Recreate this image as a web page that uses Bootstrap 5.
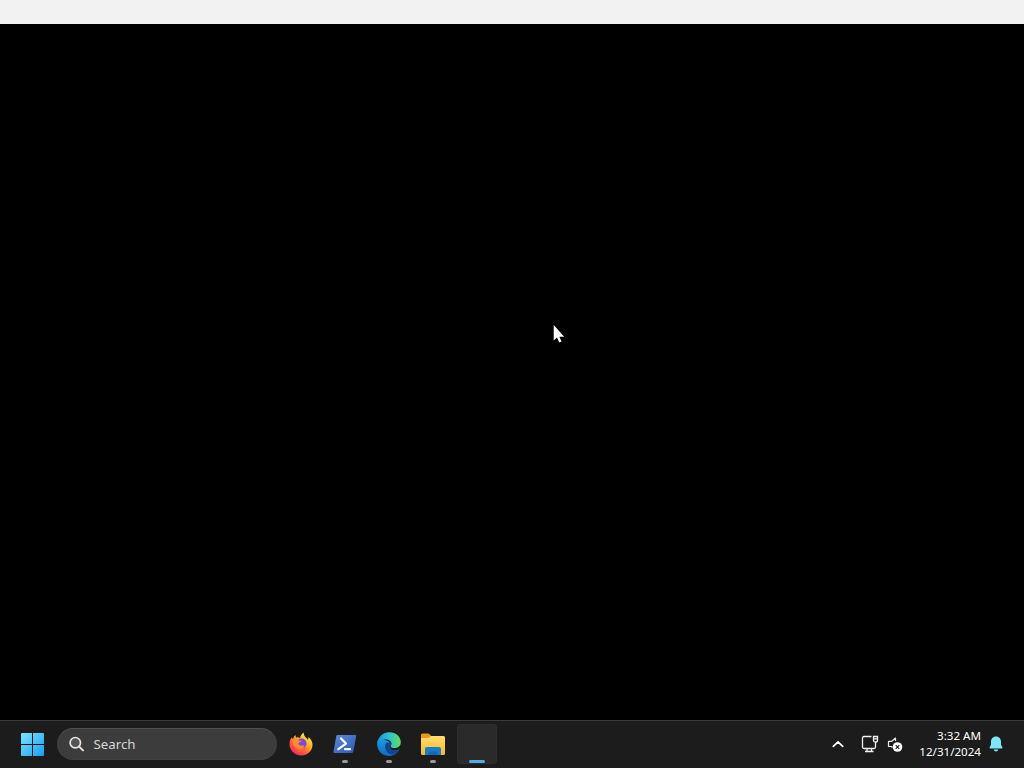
<!DOCTYPE html>
<html lang="en">
<head>
<meta charset="utf-8">
<meta name="viewport" content="width=device-width, initial-scale=1">
<title>Desktop</title>
<link href="https://cdn.jsdelivr.net/npm/bootstrap@5.3.0/dist/css/bootstrap.min.css" rel="stylesheet">
<style>
body{background:#000;font-family:"Noto Sans","Open Sans",sans-serif;cursor:default}
svg{display:block;flex:none}
.window-strip{height:24px;background:#f2f2f2}
.taskbar{height:48px;background:#1c1c1c;border-top:1px solid #393939;padding:3px 21px 4px 13px}
.task-btn{width:40px;height:40px;border:0;border-radius:4px;padding:0;background:none;position:relative}
.task-btn.active{background:#2a2a2a;box-shadow:inset 0 0 0 1px #2d2d2d}
.run-dot{position:absolute;bottom:1px;left:17px;width:6px;height:3px;border-radius:2px;background:#9a9a9a}
.active .run-dot{left:12px;width:16px;background:#55addf}
.search-pill{width:220px;height:32px;background:#3c3c3c;border:1px solid #404040;border-top-color:#505050;color:#d6d6d6;font-size:13.3px;line-height:30px;padding-left:9.500px;margin:0 4px}
.clock{font-size:11.6px;line-height:16px;color:#fff;width:70px;margin-left:8px;margin-right:8px}
.pointer{position:absolute;left:552px;top:323px}
</style>
</head>
<body class="vh-100 d-flex flex-column overflow-hidden">
<header class="window-strip flex-shrink-0"></header>
<main class="flex-grow-1"></main>
<footer class="taskbar d-flex align-items-center justify-content-between flex-shrink-0">
  <div class="d-flex align-items-center">
    <button class="task-btn d-flex align-items-center justify-content-center" aria-label="Start">
      <svg width="24" height="24" viewBox="0 0 24 24"><defs><linearGradient id="win" x1="0" y1="0" x2="24" y2="24" gradientUnits="userSpaceOnUse"><stop stop-color="#83e5ff"/><stop offset="1" stop-color="#159bf3"/></linearGradient></defs><path fill="url(#win)" d="M1 1H11V12H0V2Q0 1 1 1M12 1H22Q23 1 23 2V12H12ZM0 13H11V24H1Q0 24 0 23ZM12 13H23V23Q23 24 22 24H12Z"/></svg>
    </button>
    <div class="search-pill rounded-pill d-flex align-items-center">
      <svg width="18" height="18" viewBox="0 0 18 18" fill="none"><circle cx="7.300" cy="7.700" r="5.200" fill="#555" stroke="#e5e5e5" stroke-width="1.700"/><path d="M11.200 11.600L15 15.400" stroke="#e5e5e5" stroke-width="2" stroke-linecap="round"/></svg>
      <span class="ms-2">Search</span>
    </div>
    <div class="d-flex gap-1">
      <button class="task-btn d-flex align-items-center justify-content-center" aria-label="Firefox">
        <svg width="24" height="24" viewBox="0 0 24 24"><defs><linearGradient id="fox" x1="19" y1="2" x2="5" y2="22" gradientUnits="userSpaceOnUse"><stop stop-color="#fff04d"/><stop offset=".35" stop-color="#ffb32f"/><stop offset=".65" stop-color="#ff6537"/><stop offset="1" stop-color="#ed2468"/></linearGradient></defs><path fill="url(#fox)" d="M2.500 5.500 4 7Q4.500 4.500 6.500 3L7 5.500Q9 5 11 6C11.500 3.500 13 1.500 14.700.5 14.700 3.500 16 4.500 18 6.500L19 8 19.500 5Q23.500 8.500 23.500 13C23.300 19 18.500 23.500 12.200 23.500S.5 18.500.5 12.500Q.5 8 2.500 5.500Z"/><circle cx="12.500" cy="11.500" r="5" fill="#8048cf"/><path fill="#ff8a32" d="M3.500 8Q6.500 6 9.500 8.200L12.500 8.700Q12.200 9.800 10.200 10.400C8.700 11 9.200 13 11.500 13.500Q14 14 15.500 13C14.500 17.500 10.500 18.500 7.800 16.500 5.500 14.700 3.500 11.500 3.500 8Z"/><path fill="#ff6038" d="M5 13Q7 18 12 17.500 16 17 17 14 17.500 19 12 20 6.500 20 5 13Z"/></svg>
      </button>
      <button class="task-btn d-flex align-items-center justify-content-center" aria-label="PowerShell">
        <svg width="24" height="24" viewBox="0 0 24 24"><defs><linearGradient id="psh" x2="1" y2="1"><stop stop-color="#6089d6"/><stop offset="1" stop-color="#2d5aae"/></linearGradient></defs><path fill="url(#psh)" d="M4.500 3H22.200Q23.500 3 23.200 4.300L20.200 19.700Q19.900 21 18.600 21H1.500Q.3 21 .5 19.700L3.200 4.200Q3.400 3 4.500 3Z"/><path fill="none" stroke="#fff" stroke-width="2.200" stroke-linecap="round" stroke-linejoin="round" d="M8 6.500 13 11.600 5.300 17.200M12 17.200H17"/></svg><span class="run-dot"></span>
      </button>
      <button class="task-btn d-flex align-items-center justify-content-center" aria-label="Edge">
        <svg width="24" height="24" viewBox="0 0 24 24"><defs><linearGradient id="eg1" x1="0" y1="9" x2="24" y2="9" gradientUnits="userSpaceOnUse"><stop stop-color="#168fd9"/><stop offset=".5" stop-color="#2fc2d5"/><stop offset="1" stop-color="#65dc55"/></linearGradient><linearGradient id="eg2" x2="0" y2="1"><stop stop-color="#1b9de2"/><stop offset="1" stop-color="#1268bd"/></linearGradient></defs><path fill="url(#eg2)" d="M.2 12C.2 5 6 7 9.500 8.500Q14 10 13.800 12.200C11 13.500 12.500 18.500 17 18.500Q20 18.500 22.300 17.200C20 21.500 16.500 24 12 24 5 24 .2 18.500.2 12Z"/><path fill="#0d4591" d="M9.500 10.500C6.500 14 8.500 21.500 15 22.700 18.500 22 20.700 20 22.400 17.500 18 20 13.200 17.500 12.700 14Q12.300 12 14 10.800Z"/><path fill="url(#eg1)" d="M.2 11.500C1 4.500 6 .2 12.300.2 19.300.2 23.800 5 23.800 10.200 23.800 14.500 20.500 16 17.500 16 15 16 13.500 15 13.500 14.200 13.500 13.500 14.600 13.200 14.600 11.800 14.600 9.500 12 7.500 8.800 7.500 4.500 7.500 1 9.500.2 11.500Z"/></svg><span class="run-dot"></span>
      </button>
      <button class="task-btn d-flex align-items-center justify-content-center" aria-label="File Explorer">
        <svg width="24" height="24" viewBox="0 0 24 24"><defs><linearGradient id="fld" x2="0" y2="1"><stop stop-color="#ffdc73"/><stop offset="1" stop-color="#f7b82e"/></linearGradient></defs><path fill="#e59a18" d="M0 8V3Q0 1.500 1.500 1.500H7Q8 1.500 8.800 2.500L10.500 4.500V8Z"/><path fill="url(#fld)" d="M0 6H7.500L10 4H22.500Q24 4 24 5.500V21.500Q24 23 22.500 23H1.500Q0 23 0 21.500Z"/><path fill="#1b7dc4" d="M4 23V17Q4 15 6 15H18Q20 15 20 17V23Z"/><path fill="#1568ae" d="M7.500 23V20.500Q7.500 19.500 8.500 19.500H15.500Q16.500 19.500 16.500 20.500V23Z"/></svg><span class="run-dot"></span>
      </button>
      <button class="task-btn active" aria-label="Window"><span class="run-dot"></span></button>
    </div>
  </div>
  <div class="d-flex align-items-center">
    <svg width="14" height="14" viewBox="0 0 14 14" fill="none" stroke="#fff" stroke-width="1.700" stroke-linecap="round" stroke-linejoin="round"><path d="M2.300 9.300 7 4.800 11.700 9.300"/></svg>
    <svg class="ms-3" width="18" height="18" viewBox="0 0 18 18" fill="none" stroke="#f3f3f3" stroke-width="1.300"><path d="M10.500 1.500H3Q1.500 1.500 1.500 3V12Q1.500 13.500 3 13.500H13Q14.500 13.500 14.500 12V8M6 13.500V16.500M10.500 13.500V16.500M4 16.500H12.500M12.500 1.500H16.500V5.500Q16.500 7 14.500 7T12.500 5.500ZM12.500 3.800H16.500M14.500 7V9"/></svg>
    <svg class="ms-2" width="16" height="18" viewBox="0 0 16 18" fill="none"><path stroke="#e8e8e8" stroke-width="1.200" stroke-linejoin="round" d="M8.500 6V3L4.800 6.300H1.500V11.500H4.500L5.500 12.500"/><circle cx="10.500" cy="12" r="4.800" fill="#fff"/><path stroke="#222" stroke-width="1.200" d="M8.700 10.200 12.300 13.800M12.300 10.200 8.700 13.800"/></svg>
    <div class="clock text-end text-nowrap"><div>3:32 AM</div><div>12/31/2024</div></div>
    <svg width="14" height="16" viewBox="0 0 14 16"><path fill="#80e5f7" d="M7 .5C3.800.5 2 2.800 2 5.700V8.500L.6 11.500Q.3 12.500 1.300 12.500H12.700Q13.700 12.500 13.400 11.500L12 8.500V5.700C12 2.800 10.200.5 7 .5ZM4.700 13.500H9.300Q9 15.500 7 15.500T4.700 13.500Z"/></svg>
  </div>
</footer>
<svg class="pointer" width="14" height="22" viewBox="0 0 14 22"><path fill="#fff" d="M1.700 2V17.500L5 14.500 7.300 19.500 9.500 18.500 7.400 13.700H12.200Z"/></svg>
<script src="https://cdn.jsdelivr.net/npm/bootstrap@5.3.0/dist/js/bootstrap.bundle.min.js"></script>
</body>
</html>
